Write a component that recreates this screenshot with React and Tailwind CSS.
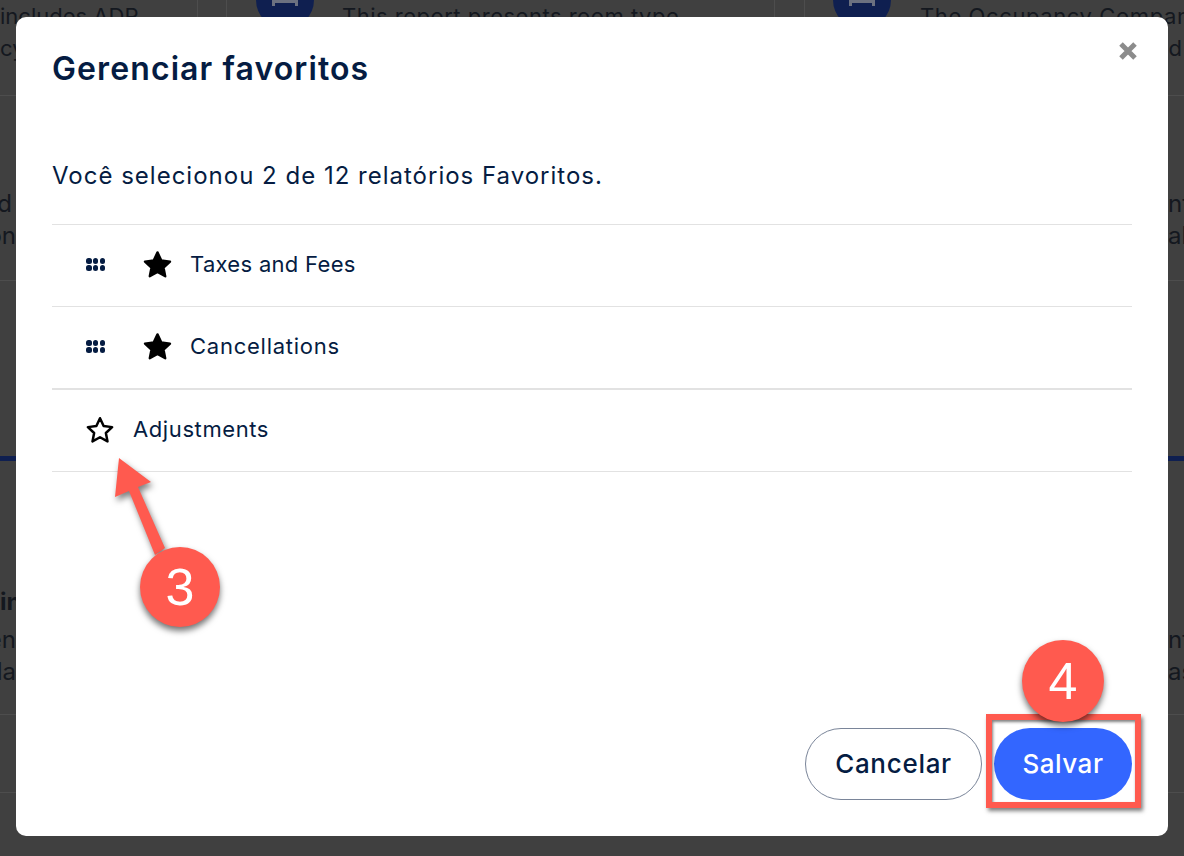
const items = [
    { id: 1, name: 'Taxes and Fees', border: 'h-[82px] border-b', tracking: 'tracking-[0.3px]' },
    { id: 2, name: 'Cancellations', border: 'h-[83px] border-b-2', tracking: 'tracking-[0.75px]' },
];

const Star = ({ filled, className }) => (
    <svg viewBox="0 0 24 24" className={className}>
        <path
            d="M12 2.6l2.9 6.2 6.8.9-5 4.7 1.3 6.7-6-3.3-6 3.3 1.3-6.7-5-4.7 6.8-.9z"
            fill={filled ? '#000' : 'none'}
            stroke="#000"
            strokeWidth={filled ? 1.8 : 2}
            strokeLinejoin="round"
        />
    </svg>
);

const Grip = () => (
    <div className="grid w-[19px] grid-cols-3 gap-x-[1.25px] gap-y-[1px]">
        {[0, 1, 2, 3, 4, 5].map((n) => (
            <span key={n} className="h-[6px] w-[5.5px] rounded-[2.5px] bg-[#051c42]" />
        ))}
    </div>
);

const Badge = ({ n, className }) => (
    <div className={`absolute flex items-center justify-center rounded-full bg-[#ff5a4f] font-['Liberation_Sans',sans-serif] text-[52px] text-white shadow-[0_4px_6px_rgba(0,0,0,0.55)] ${className}`}>
        {n}
    </div>
);

const Bed = () => (
    <svg viewBox="0 0 26 14" className="h-[14px] w-[26px]">
        <path d="M0 0h3v13H0zM23 0h3v13h-3zM3 4h20v6H3z" fill="#6c7180" />
    </svg>
);

const ReportIcon = () => (
    <div className="absolute -top-[29px] flex h-[58px] w-[58px] items-center justify-center rounded-full bg-[#0f1f50]">
        <Bed />
    </div>
);

// pagina de relatorios atras do overlay
const Backdrop = () => (
    <div className="absolute inset-0 overflow-hidden bg-[#404040] font-['Inter',sans-serif] text-[22px] leading-[32px] text-[#14181f]">
        <div className="flex h-[96px] border-b border-[#4d4d4d]">
            <div className="flex w-[198px] flex-col border-r border-[#4d4d4d] whitespace-nowrap">
                <span>includes ADR</span>
                <span>cy</span>
            </div>
            <div className="w-[28px]" />
            <div className="relative w-[549px] border-x border-[#4d4d4d]">
                <div className="absolute left-[29px]"><ReportIcon /></div>
                <div className="pl-[115px] tracking-[0.5px] whitespace-nowrap">This report presents room type</div>
            </div>
            <div className="w-[29px]" />
            <div className="relative min-w-0 flex-1 border-l border-[#4d4d4d]">
                <div className="absolute left-[28px]"><ReportIcon /></div>
                <div className="pl-[115px] tracking-[0.6px] whitespace-nowrap">The Occupancy Company</div>
                <div className="flex justify-end pr-[2px]">d</div>
            </div>
        </div>
        <div className="flex h-[185px] items-center justify-between border-b border-[#4d4d4d] pt-[64px] text-[24px]">
            <div className="flex w-4 flex-col items-end"><span className="mr-[4px]">d</span><span>on</span></div>
            <div className="flex w-4 flex-col"><span>nt</span><span>ab</span></div>
        </div>
        <div className="h-[180px] border-b-[5px] border-[#0f1f50]" />
        <div className="flex h-[254px] items-end justify-between border-b border-[#4d4d4d] pb-[26px] text-[24px]">
            <div className="flex w-4 flex-col items-end">
                <span className="self-start font-bold">in</span>
                <span className="mt-[6px]">en</span>
                <span>la</span>
            </div>
            <div className="flex w-4 flex-col"><span>nt</span><span>as</span></div>
        </div>
        <div className="h-[78px] border-b border-[#4d4d4d]" />
    </div>
);

const App = () => {
    return (
        <div className="relative h-[856px] w-[1184px] overflow-hidden">
            <Backdrop />
            <div className="absolute top-[17px] left-[16px] flex h-[819px] w-[1152px] flex-col rounded-[10px] bg-white px-[36px] font-['Inter',sans-serif] text-[#051c42]">
                <div className="flex items-start justify-between pt-[31px]">
                    <h1 className="text-[32px] leading-[42px] font-semibold tracking-[1.1px]">Gerenciar favoritos</h1>
                    <svg viewBox="0 0 18 18" className="mt-[-6px] mr-[-5px] h-[18px] w-[18px]">
                        <path d="M2 2l14 14M16 2L2 16" stroke="#8c8c8c" strokeWidth="5" />
                    </svg>
                </div>
                <p className="mt-[69px] text-[24px] leading-[34px] tracking-[1px]">Você selecionou 2 de 12 relatórios Favoritos.</p>
                <div className="mt-[31px] border-t border-[#e2e2e2]">
                    {items.map((it) => (
                        <div key={it.id} className={`flex items-center border-[#e2e2e2] pb-[2px] pl-[34px] text-[22px] ${it.border} ${it.tracking}`}>
                            <Grip />
                            <Star filled className="ml-[37px] h-[31px] w-[31px]" />
                            <span className="ml-[17px]">{it.name}</span>
                        </div>
                    ))}
                    <div className="flex h-[82px] items-center border-b border-[#e2e2e2] pb-[2px] pl-[33px] text-[22px] tracking-[0.6px]">
                        <Star className="h-[30px] w-[30px]" />
                        <span className="ml-[18px]">Adjustments</span>
                    </div>
                </div>
                <div className="mt-auto flex justify-end gap-[12px] pb-[36px]">
                    <button className="h-[72px] w-[177px] rounded-full border border-[#7a8599] bg-white pb-[2px] text-[26px] font-medium tracking-[0.7px]">Cancelar</button>
                    <button className="h-[72px] w-[138px] rounded-full bg-[#3366ff] pb-[2px] text-[26px] font-medium tracking-[0.5px] text-white">Salvar</button>
                </div>
            </div>

            {/* anotacoes do tutorial */}
            <svg className="absolute top-[450px] left-[100px] h-[120px] w-[80px] drop-shadow-[2px_4px_3px_rgba(0,0,0,0.5)]" viewBox="100 450 80 120">
                <path d="M119 458L151 482L138 487L165 548L155 555L129 491L115 497Z" fill="#ff5a4f" />
            </svg>
            <Badge n="3" className="top-[547px] left-[140px] h-[80px] w-[80px]" />
            <div className="absolute top-[714px] left-[986px] h-[94px] w-[155px] border-[6px] border-[#ff5a4f] shadow-[2px_3px_4px_rgba(0,0,0,0.5),inset_1px_2px_3px_rgba(0,0,0,0.5)]" />
            <Badge n="4" className="top-[640px] left-[1022px] h-[82px] w-[82px]" />
        </div>
    );
};

export default App;
